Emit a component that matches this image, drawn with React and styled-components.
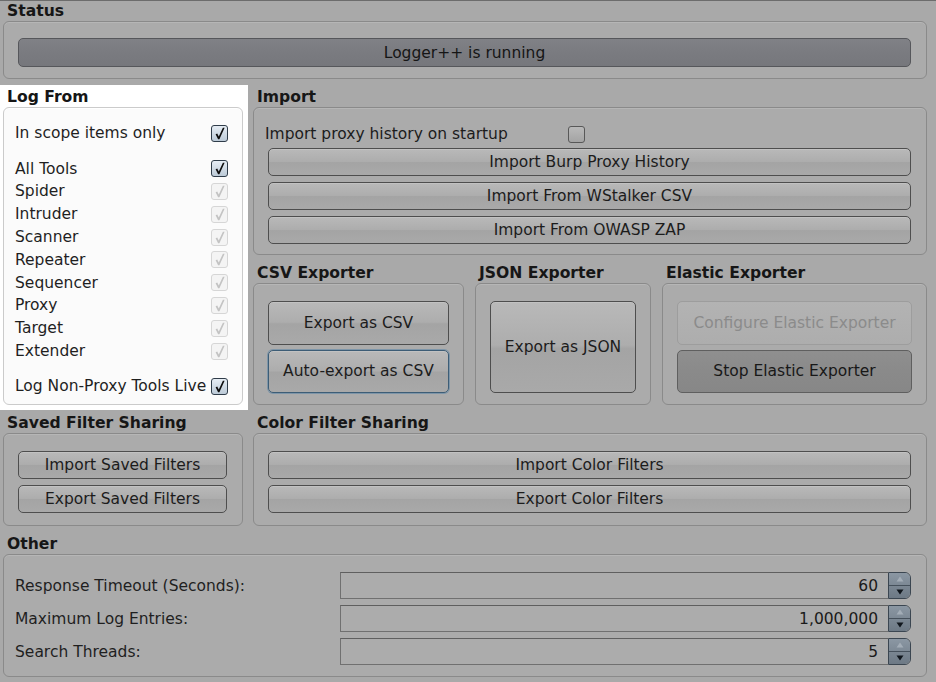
import React from "react";
import styled, { createGlobalStyle, css } from "styled-components";

const GlobalStyle = createGlobalStyle`
  html, body {
    margin: 0;
    padding: 0;
    background: #a9a9a9;
  }
  body {
    font-family: "DejaVu Sans", "Liberation Sans", sans-serif;
    font-size: 15.5px;
    color: #1c1c1c;
  }
`;

const tools = [
  "Spider",
  "Intruder",
  "Scanner",
  "Repeater",
  "Sequencer",
  "Proxy",
  "Target",
  "Extender",
];

const otherRows = [
  { label: "Response Timeout (Seconds):", value: "60" },
  { label: "Maximum Log Entries:", value: "1,000,000" },
  { label: "Search Threads:", value: "5" },
];

const CheckBox = ({ checked, disabled, light }) => (
  <Box $checked={checked} $disabled={disabled} $light={light}>
    {checked && (
      <svg width="15" height="15" viewBox="0 0 15 15">
        <path
          d="M3.6 8.2 L5.2 7.4 L6.8 10.6 L10.9 1.8 L12.6 1.8 L7.4 13.3 L6.1 13.3 Z"
          fill={disabled ? "#c3c3c3" : "#0d0d0d"}
        />
      </svg>
    )}
  </Box>
);

const Spinner = ({ value }) => (
  <Field>
    <FieldValue>{value}</FieldValue>
    <SpinButtons>
      <SpinHalf>
        <svg width="8" height="6" viewBox="0 0 8 6">
          <path d="M4 0.5 L7.5 5.5 L0.5 5.5 Z" fill="#a3adb7" />
        </svg>
      </SpinHalf>
      <SpinHalf $bottom>
        <svg width="8" height="6" viewBox="0 0 8 6">
          <path d="M0.5 0.5 L7.5 0.5 L4 5.5 Z" fill="#10161d" />
        </svg>
      </SpinHalf>
    </SpinButtons>
  </Field>
);

export default function App() {
  return (
    <>
      <GlobalStyle />
      <Page>
        <Section $span>
          <Title>Status</Title>
          <StatusPanel>
            <ProgressBar>Logger++ is running</ProgressBar>
          </StatusPanel>
        </Section>

        <Section $highlight>
          <Title>Log From</Title>
          <ListPanel $light>
            <CheckRow>
              <span>In scope items only</span>
              <CheckBox checked light />
            </CheckRow>
            <ToolGroup>
              <CheckRow>
                <span>All Tools</span>
                <CheckBox checked light />
              </CheckRow>
              {tools.map((t) => (
                <CheckRow key={t}>
                  <span>{t}</span>
                  <CheckBox checked disabled light />
                </CheckRow>
              ))}
            </ToolGroup>
            <CheckRow>
              <span>Log Non-Proxy Tools Live</span>
              <CheckBox checked light />
            </CheckRow>
          </ListPanel>
        </Section>

        <RightStack>
          <Section>
            <Title>Import</Title>
            <ImportPanel>
              <StartupRow>
                <span>Import proxy history on startup</span>
                <CheckBox />
              </StartupRow>
              <Button>Import Burp Proxy History</Button>
              <Button>Import From WStalker CSV</Button>
              <Button>Import From OWASP ZAP</Button>
            </ImportPanel>
          </Section>

          <ExportRow>
            <Section>
              <Title>CSV Exporter</Title>
              <ExportPanel>
                <Button>Export as CSV</Button>
                <Button $variant="focused">Auto-export as CSV</Button>
              </ExportPanel>
            </Section>
            <Section>
              <Title>JSON Exporter</Title>
              <ExportPanel $single>
                <Button>Export as JSON</Button>
              </ExportPanel>
            </Section>
            <Section>
              <Title>Elastic Exporter</Title>
              <ExportPanel>
                <Button $variant="disabled">Configure Elastic Exporter</Button>
                <Button $variant="pressed">Stop Elastic Exporter</Button>
              </ExportPanel>
            </Section>
          </ExportRow>
        </RightStack>

        <Section>
          <Title>Saved Filter Sharing</Title>
          <FilterPanel>
            <Button>Import Saved Filters</Button>
            <Button>Export Saved Filters</Button>
          </FilterPanel>
        </Section>

        <Section>
          <Title>Color Filter Sharing</Title>
          <FilterPanel>
            <Button>Import Color Filters</Button>
            <Button>Export Color Filters</Button>
          </FilterPanel>
        </Section>

        <Section $span>
          <Title>Other</Title>
          <OtherPanel>
            {otherRows.map((r) => (
              <React.Fragment key={r.label}>
                <FieldLabel>{r.label}</FieldLabel>
                <Spinner value={r.value} />
              </React.Fragment>
            ))}
          </OtherPanel>
        </Section>
      </Page>
    </>
  );
}

const Page = styled.div`
  display: grid;
  grid-template-columns: 240px 674px;
  column-gap: 10px;
  row-gap: 9px;
  padding: 1px 9px 0 3px;
  border-top: 1px solid #6c6c6c;
  box-sizing: border-box;
  width: 936px;
`;

const Section = styled.div`
  display: flex;
  flex-direction: column;
  gap: 1px;
  min-width: 0;
  ${(p) => p.$span && "grid-column: 1 / -1;"}
  ${(p) =>
    p.$highlight &&
    css`
      background: #ffffff;
      margin: -3px -5px -5px -3px;
      padding: 3px 5px 5px 3px;
      > div:last-child {
        flex: 1;
      }
    `}
`;

const Title = styled.div`
  font-weight: bold;
  font-size: 15.6px;
  line-height: 18px;
  padding-left: 4px;
  color: #161616;
  white-space: nowrap;
`;

const Panel = styled.div`
  border: 1px solid ${(p) => (p.$light ? "#cbcbcb" : "#8a8a8a")};
  border-radius: 6px;
  background: ${(p) => (p.$light ? "#fbfbfb" : "#ababab")};
  box-shadow: inset 0 1px 0 ${(p) => (p.$light ? "#ffffff" : "#b6b6b6")};
  box-sizing: border-box;
`;

const StatusPanel = styled(Panel)`
  padding: 16px 15px 11px 14px;
`;

const ProgressBar = styled.div`
  height: 29px;
  box-sizing: border-box;
  border: 1px solid #56575b;
  border-radius: 5px;
  background: linear-gradient(#808186, #7a7b80 50%, #76777c);
  display: flex;
  align-items: center;
  justify-content: center;
  color: #151515;
`;

const ListPanel = styled(Panel)`
  padding: 14px 14px 4px 11px;
  display: flex;
  flex-direction: column;
  gap: 12.5px;
`;

const ToolGroup = styled.div`
  display: flex;
  flex-direction: column;
`;

const CheckRow = styled.div`
  height: 22.8px;
  display: flex;
  align-items: center;
  justify-content: space-between;
  color: #1f1f1f;
  white-space: nowrap;
`;

const Box = styled.span`
  width: 17px;
  height: 17px;
  box-sizing: border-box;
  border-radius: 3px;
  display: inline-flex;
  align-items: center;
  justify-content: center;
  flex-shrink: 0;
  ${(p) =>
    p.$disabled
      ? css`
          border: 1px solid #d6d6d6;
          background: #f4f4f4;
        `
      : p.$light
      ? css`
          border: 1px solid #2f3c49;
          background: linear-gradient(#e6edf4, #bccad7);
        `
      : css`
          border: 1px solid #585858;
          background: linear-gradient(#b9b9b9, #a4a4a4);
        `}
`;

const RightStack = styled.div`
  display: flex;
  flex-direction: column;
  gap: 9px;
`;

const ImportPanel = styled(Panel)`
  padding: 14px 15px 10px 14px;
  display: flex;
  flex-direction: column;
  gap: 6px;
  button {
    height: 28px;
  }
`;

const StartupRow = styled.div`
  height: 24px;
  margin: 0 0 -4px -3px;
  display: grid;
  grid-template-columns: 303px 17px;
  align-items: center;
  color: #1c1c1c;
  white-space: nowrap;
`;

const ExportRow = styled.div`
  display: grid;
  grid-template-columns: 211px 176px 1fr;
  gap: 11px;
`;

const ExportPanel = styled(Panel)`
  height: 122px;
  padding: 17px 14px 11px 14px;
  display: grid;
  grid-template-rows: ${(p) => (p.$single ? "1fr" : "1fr 1fr")};
  gap: 5px;
`;

const FilterPanel = styled(Panel)`
  padding: 17px 15px 12px 14px;
  display: flex;
  flex-direction: column;
  gap: 6px;
  button {
    height: 28px;
  }
`;

const Button = styled.button`
  font-family: inherit;
  font-size: 15.5px;
  margin: 0;
  padding: 0 6px;
  box-sizing: border-box;
  border-radius: 5px;
  color: #1c1c1c;
  white-space: nowrap;
  cursor: default;
  border: 1px solid #4e4e4e;
  background: linear-gradient(#b9b9b9, #adadad 48%, #a4a4a4 52%, #a9a9a9);
  box-shadow: inset 0 1px 0 #c2c2c2;
  ${(p) =>
    p.$variant === "focused" &&
    css`
      border: 1px solid #3d5d76;
      box-shadow: 0 0 0 1px #7d95a8, inset 0 1px 0 #c2c2c2;
    `}
  ${(p) =>
    p.$variant === "disabled" &&
    css`
      border: 1px solid #9d9d9d;
      background: linear-gradient(#b3b3b3, #adadad);
      box-shadow: none;
      color: #8b8b8b;
    `}
  ${(p) =>
    p.$variant === "pressed" &&
    css`
      border: 1px solid #5f5f5f;
      background: linear-gradient(#8f8f8f, #8a8a8a 50%, #878787);
      box-shadow: none;
      color: #181818;
    `}
`;

const OtherPanel = styled(Panel)`
  padding: 17px 15px 11px 11px;
  display: grid;
  grid-template-columns: 325px 1fr;
  grid-auto-rows: 27px;
  row-gap: 6px;
  align-items: center;
`;

const FieldLabel = styled.div`
  color: #1f1f1f;
  white-space: nowrap;
`;

const Field = styled.div`
  height: 27px;
  display: flex;
  box-sizing: border-box;
`;

const FieldValue = styled.div`
  flex: 1;
  border: 1px solid #707070;
  border-top-color: #5f5f5f;
  border-right: none;
  background: #acacac;
  display: flex;
  align-items: center;
  justify-content: flex-end;
  padding-right: 10px;
  color: #1a1a1a;
`;

const SpinButtons = styled.div`
  width: 23px;
  display: flex;
  flex-direction: column;
  border: 1px solid #3b4651;
  border-radius: 0 6px 6px 0;
  overflow: hidden;
  box-sizing: border-box;
`;

const SpinHalf = styled.div`
  flex: 1;
  display: flex;
  align-items: center;
  justify-content: center;
  background: ${(p) =>
    p.$bottom
      ? "linear-gradient(#7a8692, #6d7985)"
      : "linear-gradient(#8b97a3, #7d8995)"};
  ${(p) => p.$bottom && "border-top: 1px solid #45505b;"}
`;
